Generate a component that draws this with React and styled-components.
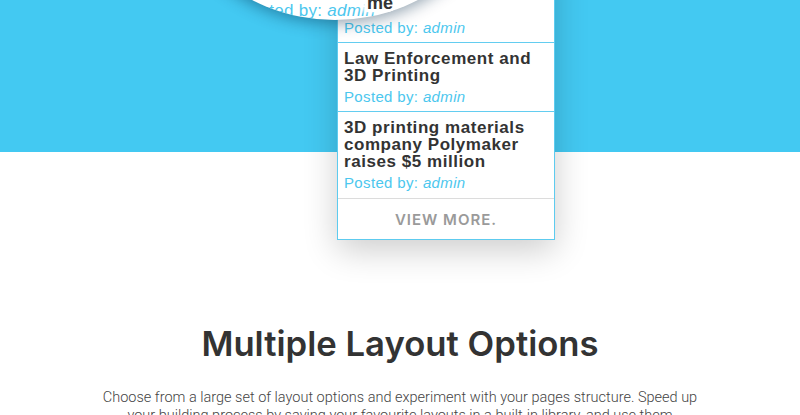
import React from 'react';
import styled, { createGlobalStyle } from 'styled-components';

const Global = createGlobalStyle`
  html, body { margin: 0; padding: 0; background: #fff; }
  body { width: 800px; height: 415px; overflow: hidden; }
  * { box-sizing: border-box; }
`;

const Page = styled.div`
  width: 800px;
  height: 415px;
  overflow: hidden;
  position: relative;
  font-family: "Liberation Sans", Arial, sans-serif;
`;

const Hero = styled.section`
  position: relative;
  height: 152px;
  background: #43c9f2;
`;

/* magnifier lens floating over the feed widget */
const Lens = styled.div`
  position: absolute;
  left: 153px;
  top: -344px;
  width: 364px;
  height: 364px;
  border-radius: 50%;
  background: #fff;
  overflow: hidden;
  box-shadow: 0 3px 16px rgba(0, 40, 70, 0.45);
  z-index: 3;
`;

const LensTitle = styled.span`
  position: absolute;
  left: 212px;
  top: 338px;
  padding-left: 2px;
  font-size: 18px;
  font-weight: 700;
  line-height: 18px;
  color: #333;
  background: #fff;
  white-space: nowrap;
  box-shadow: -3px 0 4px rgba(255, 255, 255, 0.9);
`;

const LensPosted = styled.span`
  position: absolute;
  left: 86px;
  top: 346px;
  font-size: 17px;
  line-height: 17px;
  color: #4cc7ee;
  letter-spacing: 0.3px;
  white-space: nowrap;
  em { font-style: italic; }
`;

const Feed = styled.div`
  position: absolute;
  left: 337px;
  bottom: -88px;
  width: 218px;
  background: #fff;
  border: 1px solid #5dcbef;
  box-shadow: 0 10px 32px rgba(0, 0, 0, 0.2);
  z-index: 2;
`;

const Item = styled.div`
  padding: 7px 6px ${p => (p.$last ? '6px' : '5px')};
  border-bottom: ${p => (p.$last ? 'none' : '1px solid #63cdf0')};
`;

const Title = styled.h4`
  margin: 0 0 4px;
  font-size: 17px;
  line-height: 17px;
  font-weight: 700;
  letter-spacing: 0.55px;
  color: #333;
`;

const Posted = styled.div`
  font-size: 15px;
  line-height: 18px;
  letter-spacing: 0.35px;
  color: #4cc7ee;
  em { font-style: italic; }
`;

const ViewMore = styled.div`
  height: 41px;
  border-top: 1px solid #dcdcdc;
  display: flex;
  align-items: center;
  justify-content: center;
  font-family: Inter, "Open Sans", sans-serif;
  font-weight: 600;
  font-size: 15px;
  letter-spacing: 1px;
  color: #9a9a9a;
  text-transform: uppercase;
`;

const Features = styled.section`
  padding-top: 171px;
  display: flex;
  flex-direction: column;
  align-items: center;
`;

const Heading = styled.h2`
  margin: 0;
  font-family: Inter, "Open Sans", sans-serif;
  font-weight: 600;
  font-size: 34.7px;
  line-height: 40px;
  color: #333;
  text-align: center;
`;

const Lead = styled.p`
  margin: 26px 0 0;
  width: 600px;
  font-family: Roboto, "Open Sans", sans-serif;
  font-weight: 300;
  font-size: 14.5px;
  line-height: 18px;
  color: #444;
  text-align: center;
`;

const posts = [
  { title: 'Printing Prosthetics for Kids, One Child at a Time' },
  { title: 'Law Enforcement and 3D Printing' },
  { title: '3D printing materials company Polymaker raises $5 million' },
];

export default function App() {
  return (
    <Page>
      <Global />
      <Hero>
        <Feed>
          {posts.map((p, i) => (
            <Item key={i} $last={i === posts.length - 1}>
              <Title>{p.title}</Title>
              <Posted>Posted by: <em>admin</em></Posted>
            </Item>
          ))}
          <ViewMore>View more.</ViewMore>
        </Feed>
        <Lens>
          <LensPosted>Posted by: <em>admin</em></LensPosted>
          <LensTitle>me</LensTitle>
        </Lens>
      </Hero>
      <Features>
        <Heading>Multiple Layout Options</Heading>
        <Lead>
          Choose from a large set of layout options and experiment with your pages structure. Speed up
          your building process by saving your favourite layouts in a built-in library, and use them
          whenever you need them again.
        </Lead>
      </Features>
    </Page>
  );
}
